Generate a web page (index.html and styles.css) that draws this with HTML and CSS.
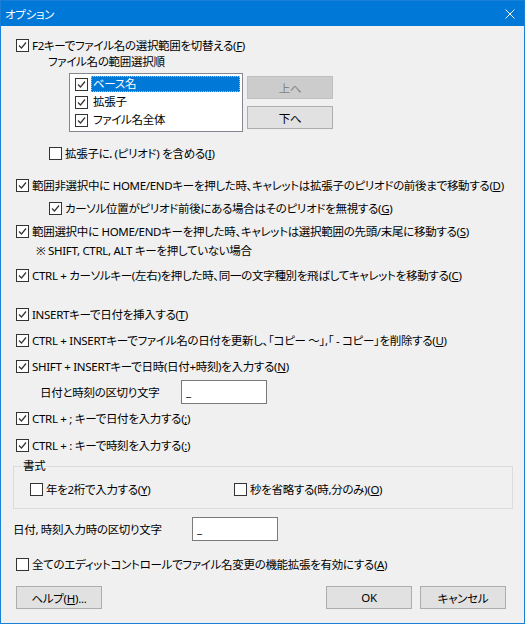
FILE: index.html
```html
<!DOCTYPE html>
<html lang="ja">
  <head>
    <meta charset="utf-8" />
    <title>オプション</title>
    <link rel="stylesheet" href="styles.css">
  </head>
  <body>
    <div class="window">
      <div class="titlebar">
        <span class="title">オプション</span>
        <svg class="close" width="10" height="10" viewBox="0 0 10 10">
          <path d="M0.5 0.5 L9.5 9.5 M9.5 0.5 L0.5 9.5" />
        </svg>
      </div>

      <div class="client">
        <!-- F2 rename selection -->
        <label class="opt first">
          <span class="cb on"><svg viewBox="0 0 11 11"><path d="M2 5.5 L4.5 8 L9 2.5" /></svg></span>
          <span>F2キーでファイル名の選択範囲を切替える(<u>F</u>)</span>
        </label>
        <div class="sublabel">ファイル名の範囲選択順</div>

        <div class="order">
          <ul class="listbox">
            <li>
              <span class="cb on"><svg viewBox="0 0 11 11"><path d="M2 5.5 L4.5 8 L9 2.5" /></svg></span>
              <span class="item selected">ベース名</span>
            </li>
            <li>
              <span class="cb on"><svg viewBox="0 0 11 11"><path d="M2 5.5 L4.5 8 L9 2.5" /></svg></span>
              <span class="item">拡張子</span>
            </li>
            <li>
              <span class="cb on"><svg viewBox="0 0 11 11"><path d="M2 5.5 L4.5 8 L9 2.5" /></svg></span>
              <span class="item">ファイル名全体</span>
            </li>
          </ul>
          <div class="order-buttons">
            <button class="btn" disabled>上へ</button>
            <button class="btn">下へ</button>
          </div>
        </div>

        <label class="opt indent sp-13">
          <span class="cb"></span>
          <span>拡張子に．(ピリオド) を含める(<u>I</u>)</span>
        </label>

        <!-- HOME / END -->
        <label class="opt sp-16">
          <span class="cb on"><svg viewBox="0 0 11 11"><path d="M2 5.5 L4.5 8 L9 2.5" /></svg></span>
          <span>範囲非選択中に HOME/ENDキーを押した時、キャレットは拡張子のピリオドの前後まで移動する(<u>D</u>)</span>
        </label>
        <label class="opt indent sp-7">
          <span class="cb on"><svg viewBox="0 0 11 11"><path d="M2 5.5 L4.5 8 L9 2.5" /></svg></span>
          <span>カーソル位置がピリオド前後にある場合はそのピリオドを無視する(<u>G</u>)</span>
        </label>
        <label class="opt sp-7">
          <span class="cb on"><svg viewBox="0 0 11 11"><path d="M2 5.5 L4.5 8 L9 2.5" /></svg></span>
          <span>範囲選択中に HOME/ENDキーを押した時、キャレットは選択範囲の先頭/末尾に移動する(<u>S</u>)</span>
        </label>
        <div class="note">※ SHIFT, CTRL, ALT キーを押していない場合</div>
        <label class="opt sp-8">
          <span class="cb on"><svg viewBox="0 0 11 11"><path d="M2 5.5 L4.5 8 L9 2.5" /></svg></span>
          <span>CTRL + カーソルキー(左右)を押した時、同一の文字種別を飛ばしてキャレットを移動する(<u>C</u>)</span>
        </label>

        <!-- date / time insert -->
        <label class="opt sp-23">
          <span class="cb on"><svg viewBox="0 0 11 11"><path d="M2 5.5 L4.5 8 L9 2.5" /></svg></span>
          <span>INSERTキーで日付を挿入する(<u>T</u>)</span>
        </label>
        <label class="opt sp-10">
          <span class="cb on"><svg viewBox="0 0 11 11"><path d="M2 5.5 L4.5 8 L9 2.5" /></svg></span>
          <span>CTRL + INSERTキーでファイル名の日付を更新し、「コピー ～」,「 - コピー」を削除する(<u>U</u>)</span>
        </label>
        <label class="opt sp-10">
          <span class="cb on"><svg viewBox="0 0 11 11"><path d="M2 5.5 L4.5 8 L9 2.5" /></svg></span>
          <span>SHIFT + INSERTキーで日時(日付+時刻)を入力する(<u>N</u>)</span>
        </label>
        <div class="field datetime-sep">
          <span class="field-label">日付と時刻の区切り文字</span>
          <span class="textbox">_</span>
        </div>
        <label class="opt sp-6">
          <span class="cb on"><svg viewBox="0 0 11 11"><path d="M2 5.5 L4.5 8 L9 2.5" /></svg></span>
          <span>CTRL + ; キーで日付を入力する(<u>;</u>)</span>
        </label>
        <label class="opt sp-11">
          <span class="cb on"><svg viewBox="0 0 11 11"><path d="M2 5.5 L4.5 8 L9 2.5" /></svg></span>
          <span>CTRL + : キーで時刻を入力する(<u>:</u>)</span>
        </label>

        <fieldset class="group">
          <legend>書式</legend>
          <div class="group-row">
            <label class="opt year">
              <span class="cb"></span>
              <span>年を2桁で入力する(<u>Y</u>)</span>
            </label>
            <label class="opt">
              <span class="cb"></span>
              <span>秒を省略する(時,分のみ)(<u>O</u>)</span>
            </label>
          </div>
        </fieldset>

        <div class="field input-sep">
          <span class="field-label">日付, 時刻入力時の区切り文字</span>
          <span class="textbox">_</span>
        </div>

        <label class="opt sp-15">
          <span class="cb"></span>
          <span>全てのエディットコントロールでファイル名変更の機能拡張を有効にする(<u>A</u>)</span>
        </label>

        <div class="footer">
          <button class="btn">ヘルプ(<u>H</u>)...</button>
          <div class="footer-right">
            <button class="btn">OK</button>
            <button class="btn">キャンセル</button>
          </div>
        </div>
      </div>
    </div>
  </body>
</html>
```

FILE: styles.css
```css
body {
  margin: 0;
  font-family: "Noto Sans", "Noto Sans CJK JP", sans-serif;
  font-size: 11.5px;
  font-feature-settings: "palt";
  letter-spacing: -0.3px;
  color: #000;
}

.window {
  width: 525px;
  height: 624px;
  box-sizing: border-box;
  border: 1px solid #1a7fd6;
  background-color: #f0f0f0;
  overflow: hidden;
}

.titlebar {
  height: 25px;
  background-color: #0078d7;
  color: #fff;
  display: flex;
  align-items: center;
  justify-content: space-between;
  padding: 0 9px 0 4px;
}

.close path {
  stroke: #fff;
  stroke-width: 1;
  fill: none;
}

/* checkbox rows */
.opt {
  display: flex;
  align-items: center;
  gap: 3px;
  height: 16px;
  padding-left: 15px;
  white-space: pre;
}

.opt.first {
  margin-top: 11px;
}

.opt.indent {
  padding-left: 48px;
}

.sp-6 { margin-top: 6px; }
.sp-7 { margin-top: 7px; }
.sp-8 { margin-top: 8px; }
.sp-10 { margin-top: 10px; }
.sp-11 { margin-top: 11px; }
.sp-13 { margin-top: 13px; }
.sp-15 { margin-top: 15px; }
.sp-16 { margin-top: 16px; }
.sp-23 { margin-top: 23px; }

.cb {
  flex: none;
  width: 13px;
  height: 13px;
  box-sizing: border-box;
  border: 1px solid #333;
  background-color: #fff;
  display: inline-flex;
  align-items: center;
  justify-content: center;
}

.cb svg {
  width: 11px;
  height: 11px;
}

.cb path {
  stroke: #333;
  stroke-width: 1.2;
  fill: none;
}

u {
  text-decoration: underline;
  text-underline-offset: 1px;
}

.sublabel {
  margin-top: 1px;
  height: 16px;
  line-height: 16px;
  padding-left: 47px;
}

/* list box + up/down */
.order {
  display: flex;
  gap: 4px;
  margin-top: 3px;
  padding-left: 68px;
}

.listbox {
  list-style: none;
  margin: 0;
  width: 174px;
  height: 59px;
  box-sizing: border-box;
  padding: 1px 0 0 5px;
  border: 1px solid #828790;
  background-color: #fff;
}

.listbox li {
  display: flex;
  align-items: center;
  height: 18px;
  gap: 3px;
}

.listbox .item {
  flex: 1;
  height: 16px;
  line-height: 16px;
  padding-left: 2px;
  margin-right: 2px;
  box-sizing: border-box;
}

.listbox .item.selected {
  background-color: #0078d7;
  color: #fff;
  outline: 1px dotted #f7b64b;
  outline-offset: -1px;
}

.order-buttons {
  display: flex;
  flex-direction: column;
  gap: 7px;
  padding-top: 3px;
}

.btn {
  width: 86px;
  height: 23px;
  padding: 0;
  font: inherit;
  letter-spacing: inherit;
  color: #000;
  background-color: #e1e1e1;
  border: 1px solid #adadad;
}

.btn:disabled {
  background-color: #cccccc;
  border-color: #bfbfbf;
  color: #838383;
}

.note {
  margin-top: 4px;
  height: 16px;
  line-height: 16px;
  padding-left: 35px;
  white-space: pre;
}

/* label + text box rows */
.field {
  display: flex;
  align-items: center;
  height: 24px;
  white-space: pre;
}

.datetime-sep {
  margin-top: 6px;
  padding-left: 39px;
}

.datetime-sep .field-label {
  width: 141px;
}

.input-sep {
  margin-top: 8px;
  padding-left: 12px;
}

.input-sep .field-label {
  width: 179px;
}

.textbox {
  width: 86px;
  height: 24px;
  box-sizing: border-box;
  border: 1px solid #7a7a7a;
  background-color: #fff;
  padding-left: 4px;
  line-height: 22px;
}

/* 書式 group */
.group {
  margin: 5px 11px 0 12px;
  padding: 0 8px 11px 8px;
  border: 1px solid #dcdcdc;
}

.group legend {
  padding: 0 1px;
  line-height: 16px;
}

.group-row {
  display: flex;
  margin-top: 7px;
}

.group .opt {
  padding-left: 8px;
}

.group .opt.year {
  width: 196px;
}

.footer {
  display: flex;
  justify-content: space-between;
  margin-top: 14px;
  padding: 0 18px 0 15px;
}

.footer-right {
  display: flex;
  gap: 8px;
}
```
